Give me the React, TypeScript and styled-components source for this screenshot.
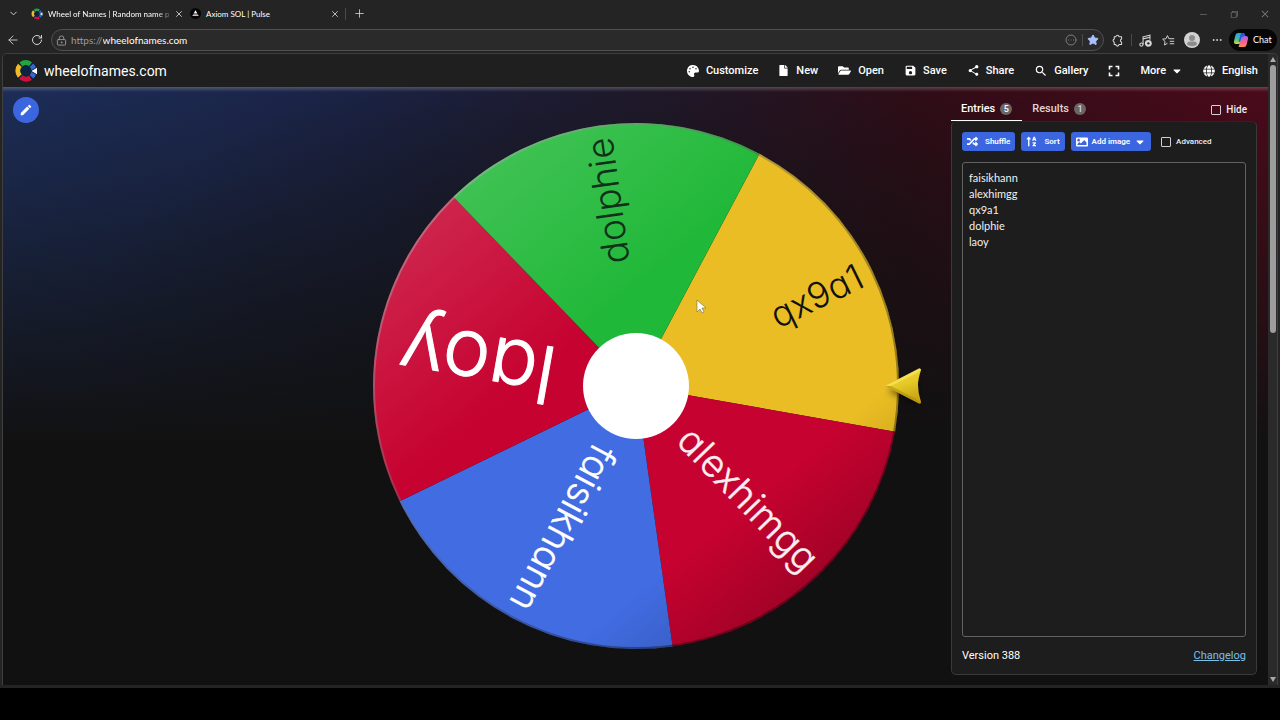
import React from 'react';
import styled, { createGlobalStyle } from 'styled-components';
import { MdSave, MdShare, MdSearch, MdEdit } from 'react-icons/md';
import { FaPalette, FaFile, FaFolderOpen, FaImage, FaRandom, FaSortAlphaUp, FaGlobe, FaCaretDown } from 'react-icons/fa';
import { VscChromeMinimize, VscChromeRestore, VscChromeClose } from 'react-icons/vsc';
import { ChevronDown, X, Plus, ArrowLeft, RotateCw, LockKeyhole, CircleEllipsis, Star, Ellipsis } from 'lucide-react';

const ui = `Lato, 'Noto Sans', sans-serif`;
const roboto = `Roboto, 'Liberation Sans', sans-serif`;

const Global = createGlobalStyle`
  *, *::before, *::after { box-sizing: border-box; }
  body { margin: 0; background: #000; color: #fff; font-family: ${roboto}; }
  button { font: inherit; color: inherit; border: 0; background: none; padding: 0; cursor: pointer; }
`;

const Screen = styled.div`
  display: flex;
  flex-direction: column;
  height: 100vh;
  min-height: 480px;
  padding-bottom: 32px;
  overflow: hidden;
`;

const Browser = styled.div`
  flex: 1;
  min-height: 0;
  display: flex;
  flex-direction: column;
  background: #242424;
`;

const TabStrip = styled.header`
  display: flex;
  align-items: center;
  height: 27px;
  padding-left: 6px;
  font: 8px/12px ${ui};
`;

const IconButton = styled.button<{ $w?: number; $dim?: boolean }>`
  display: flex;
  align-items: center;
  justify-content: center;
  flex: none;
  width: ${p => p.$w ?? 24}px;
  height: 20px;
  color: ${p => (p.$dim ? '#7d7d7d' : '#d6d6d6')};
`;

const Tabs = styled.div`
  display: flex;
  margin-left: 7px;
`;

const Tab = styled.div`
  display: flex;
  align-items: center;
  gap: 5px;
  width: 159px;
  height: 24px;
  padding: 0 5px 0 4px;
  color: #fff;
  svg { flex: none; }
`;

const TabTitle = styled.span<{ $fade?: boolean }>`
  flex: 1;
  white-space: nowrap;
  ${p => p.$fade && 'mask-image: linear-gradient(90deg, #000 90%, #0004);'}
`;

const Separator = styled.span`
  flex: none;
  width: 1px;
  height: 12px;
  background: #4a4a4a;
`;

const Spacer = styled.div`
  flex: 1;
`;

const AddressRow = styled.div`
  display: flex;
  align-items: center;
  height: 26px;
  padding: 0 3px 0 2px;
`;

const AddressBar = styled.div`
  flex: 1;
  display: flex;
  align-items: center;
  height: 22px;
  margin-left: 2px;
  padding-left: 4px;
  border: 1px solid #505050;
  border-radius: 11px;
  background: #2a2a2a;
`;

const AddressLabel = styled.label`
  flex: 1;
  display: flex;
  padding-left: 4px;
  font: 10px/16px ${ui};
  color: #9a9a9a;
  input {
    flex: 1;
    min-width: 0;
    padding: 0;
    border: 0;
    outline: none;
    background: none;
    color: #fff;
    font: inherit;
  }
`;

const ChatButton = styled.button`
  display: flex;
  align-items: center;
  gap: 4px;
  height: 22px;
  width: 48px;
  padding-left: 4px;
  border-radius: 11px;
  background: #060606;
  font: 9px/16px ${ui};
`;

const Viewport = styled.div`
  flex: 1;
  min-height: 0;
  display: flex;
  margin: 0 2px 3px;
  border: 1px solid #3f3f3f;
  border-width: 1px 1px 0;
  border-radius: 5px 5px 0 0;
  overflow: hidden;
  background: #1e1e1e;
`;

const Site = styled.div`
  flex: 1;
  min-width: 0;
  display: flex;
  flex-direction: column;
`;

const Toolbar = styled.nav`
  display: flex;
  align-items: center;
  height: 33px;
  padding: 0 10px 0 11px;
  background: #1f1f1f;
`;

const Brand = styled.a`
  display: flex;
  align-items: center;
  gap: 6px;
  color: #fff;
  text-decoration: none;
  font-size: 14px;
  line-height: 20px;
`;

const Menu = styled.div`
  display: flex;
  align-items: center;
  gap: 20px;
`;

const MenuButton = styled.button<{ $gap?: number }>`
  display: flex;
  align-items: center;
  gap: ${p => p.$gap ?? 7}px;
  font-size: 11px;
  line-height: 16px;
  font-weight: 500;
  svg { flex: none; }
`;

const Stage = styled.main`
  flex: 1;
  min-height: 0;
  display: grid;
  grid-template-columns: 1fr auto 1fr;
  grid-template-rows: minmax(0, 1fr);
  background:
    linear-gradient(180deg, #ffffff38, transparent 5px),
    radial-gradient(ellipse 45% 60% at 50% 50%, #111111b0, #11111100),
    linear-gradient(180deg, #11111100 0%, #11111148 18%, #111111a0 38%, #111 60%),
    linear-gradient(90deg, #1c2d58, #1b2346 28%, #201a2e 50%, #300c17 72%, #4b0a1b);
`;

const EditButton = styled.button`
  display: grid;
  place-items: center;
  width: 26px;
  height: 26px;
  margin: 10px;
  border-radius: 50%;
  background: #3b66e0;
`;

const WheelSvg = styled.svg`
  height: 100%;
  width: auto;
  max-width: 100%;
`;

const SliceLabel = styled.text`
  font-family: Inter, Lato, sans-serif;
  font-feature-settings: 'cv11';
  font-weight: 300;
  text-anchor: end;
  stroke-linejoin: round;
`;

const Side = styled.aside`
  justify-self: end;
  display: flex;
  flex-direction: column;
  width: 306px;
  margin: 9px 11px 10px 0;
`;

const TabsRow = styled.div`
  display: flex;
  align-items: stretch;
  height: 25px;
  padding-right: 10px;
`;

const SideTab = styled.button<{ $active?: boolean }>`
  display: flex;
  align-items: center;
  gap: 5px;
  padding: 2px 10px 0;
  border-bottom: 1px solid ${p => (p.$active ? '#fff' : 'transparent')};
  font-size: 11px;
  line-height: 16px;
  font-weight: 500;
  color: ${p => (p.$active ? '#fff' : '#e0d5d8')};
`;

const Count = styled.span`
  min-width: 12px;
  height: 12px;
  border-radius: 6px;
  background: #6a6567;
  font-size: 9px;
  line-height: 12px;
  text-align: center;
`;

const Check = styled.label<{ $small?: boolean }>`
  display: flex;
  align-items: center;
  gap: 5px;
  padding-top: ${p => (p.$small ? 0 : 2)}px;
  margin-left: ${p => (p.$small ? 4 : 0)}px;
  font-size: ${p => (p.$small ? 8 : 10)}px;
  line-height: 12px;
  font-weight: 500;
  color: #eee;
  input {
    appearance: none;
    width: 10px;
    height: 10px;
    margin: 0;
    border: 1px solid #d0d0d0;
    border-radius: 1px;
  }
`;

const Card = styled.section`
  flex: 1;
  min-height: 0;
  display: flex;
  flex-direction: column;
  padding: 10px;
  border: 1px solid #3a3a3a;
  border-top-color: #262626;
  border-radius: 5px;
  background: #1d1d1d;
`;

const Actions = styled.div`
  display: flex;
  align-items: center;
  gap: 6px;
`;

const Action = styled.button<{ $gap?: number }>`
  display: flex;
  align-items: center;
  gap: ${p => p.$gap ?? 7}px;
  height: 19px;
  padding: 0 5px;
  border-radius: 3px;
  background: #3b66e0;
  font-size: 8px;
  line-height: 12px;
  font-weight: 600;
`;

const Entries = styled.textarea`
  flex: 1;
  min-height: 0;
  margin: 11px 0;
  padding: 7px 6px;
  border: 1px solid #626262;
  border-radius: 3px;
  background: transparent;
  color: #f1f1f1;
  font: 11px/16px ${ui};
  resize: none;
  outline: none;
`;

const Footer = styled.footer`
  display: flex;
  justify-content: space-between;
  font-size: 11px;
  line-height: 16px;
  a { color: #79c0e8; }
`;

const Scrollbar = styled.div`
  display: flex;
  flex-direction: column;
  align-items: center;
  justify-content: space-between;
  width: 9px;
  padding: 3px 0;
  background: #2a2a2a;
`;

const ScrollTrack = styled.div`
  flex: 1;
  width: 6px;
  margin: 3px 0;
`;

const Thumb = styled.div`
  height: 44%;
  border-radius: 3px;
  background: #9d9d9d;
`;

const CX = 286;
const CY = 299;
const R = 263;

const point = (deg: number) => {
  const a = (deg * Math.PI) / 180;
  return `${CX + R * Math.cos(a)} ${CY + R * Math.sin(a)}`;
};

const slices = [
  { name: 'qx9a1', mid: -26, fill: '#e9bd23', ink: '#111', size: 36, end: 251, base: 11, stroke: 0 },
  { name: 'alexhimgg', mid: 46, fill: '#c60230', ink: '#fbeef0', size: 38, end: 251, base: 11, stroke: 0.4 },
  { name: 'faisikhann', mid: 118, fill: '#416ce2', ink: '#fff', size: 38, end: 251, base: 11, stroke: 0.4 },
  { name: 'laoy', mid: 190, fill: '#c60230', ink: '#fff', size: 80, end: 239, base: 24, stroke: 1 },
  { name: 'dolphie', mid: 262, fill: '#20b838', ink: '#10301a', size: 37, end: 251, base: 11, stroke: 0 },
];

function Wheel() {
  return (
    <WheelSvg viewBox="0 0 572 598" role="img" aria-label="Wheel">
      <defs>
        <linearGradient id="sheen" x1="0.15" y1="0.1" x2="0.85" y2="0.95">
          <stop offset="0" stopColor="#fff" stopOpacity="0.15" />
          <stop offset="0.36" stopColor="#fff" stopOpacity="0" />
          <stop offset="0.76" stopColor="#000" stopOpacity="0" />
          <stop offset="1" stopColor="#000" stopOpacity="0.24" />
        </linearGradient>
        <linearGradient id="rim" x1="0.1" y1="0.1" x2="0.8" y2="0.7">
          <stop offset="0" stopColor="#bbb" stopOpacity="0.5" />
          <stop offset="0.45" stopColor="#666" stopOpacity="0.4" />
          <stop offset="1" stopColor="#000" stopOpacity="0.35" />
        </linearGradient>
        <linearGradient id="gold" x1="0" y1="0" x2="0.3" y2="1">
          <stop offset="0" stopColor="#eed63a" />
          <stop offset="0.55" stopColor="#e6c926" />
          <stop offset="1" stopColor="#c9a515" />
        </linearGradient>
        <filter id="soft" x="-50%" y="-50%" width="200%" height="200%">
          <feGaussianBlur stdDeviation="3" />
        </filter>
      </defs>
      {slices.map(s => (
        <path key={s.name} fill={s.fill} d={`M${CX} ${CY}L${point(s.mid - 36)}A${R} ${R} 0 0 1 ${point(s.mid + 36)}Z`} />
      ))}
      <circle cx={CX} cy={CY} r={R} fill="url(#sheen)" />
      <circle cx={CX} cy={CY} r={R - 1} fill="none" stroke="url(#rim)" strokeWidth="2" />
      {slices.map(s => (
        <SliceLabel
          key={s.name}
          x={s.end}
          y={s.base}
          fill={s.ink}
          stroke={s.ink}
          strokeWidth={s.stroke}
          fontSize={s.size}
          transform={`translate(${CX} ${CY}) rotate(${s.mid})`}
        >
          {s.name}
        </SliceLabel>
      ))}
      <circle cx={CX} cy={CY} r="53" fill="#fff" />
      <path d="M538 304L566 288L568 320Z" fill="#000" opacity="0.45" filter="url(#soft)" />
      <path d="M535 299L569 281.500Q571 281 571 283Q568 292 568 298Q568 306 571 315Q571 317 569 316.500Z" fill="url(#gold)" />
      <path d="M535 299L569 281.500Q571 281 571 283L567 286L541 299Z" fill="#fff27a" opacity="0.5" />
      <path d="M535 299L569 316.500Q571 317 571 315L566 312L541 299Z" fill="#a8860c" opacity="0.5" />
      <path d="M347 213v12l3-3 2 4 2-1-2-4h4Z" fill="#fff" stroke="#555" strokeWidth="0.5" />
    </WheelSvg>
  );
}

function Logo({ size }: { size: number }) {
  return (
    <svg width={size} height={size} viewBox="0 0 24 24" aria-hidden="true">
      <circle cx="12" cy="12" r="11" fill="#0b2440" />
      <g fill="none" strokeWidth="5">
        <path d="M7 5.400A8 8 0 0 1 16.500 5.200" stroke="#23a63c" />
        <path d="M5.800 17A8 8 0 0 1 5.900 6.400" stroke="#eebb22" />
        <path d="M16.500 18.800A8 8 0 0 1 6.800 18.200" stroke="#d0103a" />
        <path d="M17.500 6.200A8 8 0 0 1 17.500 17.800" stroke="#3566d6" />
      </g>
      <circle cx="12" cy="12" r="5" fill="#0b2440" />
      <path d="M16.500 12L23.500 8V16Z" fill="#fff" stroke="#0b2440" strokeWidth="1" />
    </svg>
  );
}

function Copilot() {
  return (
    <svg width="16" height="16" viewBox="0 0 16 16" aria-hidden="true">
      <defs>
        <linearGradient id="cpA" x1="0" y1="0" x2="0" y2="1">
          <stop offset="0" stopColor="#2a9df4" />
          <stop offset="0.6" stopColor="#45c48c" />
          <stop offset="1" stopColor="#f2d02c" />
        </linearGradient>
        <linearGradient id="cpB" x1="0" y1="0" x2="0" y2="1">
          <stop offset="0" stopColor="#a65cf0" />
          <stop offset="0.5" stopColor="#f0609c" />
          <stop offset="1" stopColor="#fb8d4e" />
        </linearGradient>
      </defs>
      <path d="M5 1h5.500L7.500 10.500Q7 12 5.500 12H3Q.5 12 1 9L2.500 3Q3 1 5 1Z" fill="url(#cpA)" />
      <path d="M11 15H5.500L8.500 5.500Q9 4 10.500 4H13Q15.500 4 15 7L13.500 13Q13 15 11 15Z" fill="url(#cpB)" />
      <path d="M8 1h2.500Q12 1 12.500 4H10.500Q9 4 8.500 5.500L7 10L5.500 9.500Z" fill="#1e5fd0" />
    </svg>
  );
}

function Extensions() {
  return (
    <svg width="13" height="13" viewBox="0 0 16 16" fill="none" stroke="currentColor" strokeWidth="1.300" strokeLinejoin="round" aria-hidden="true">
      <path d="M4 3.500H6A1.900 1.900 0 0 1 9.800 3.500H13V6.300A1.900 1.900 0 0 0 13 10V13H9.800A1.900 1.900 0 0 1 6 13H4V10A1.900 1.900 0 0 1 4 6.300Z" />
    </svg>
  );
}

function MusicBadge() {
  return (
    <svg width="13" height="13" viewBox="0 0 16 16" fill="none" stroke="currentColor" strokeWidth="1.300" aria-hidden="true">
      <circle cx="3" cy="13" r="2" />
      <path d="M5 13V3.500L13.500 1.500V7M5 6L13.500 4" />
      <circle cx="11.500" cy="11.500" r="4.200" fill="currentColor" stroke="none" />
      <circle cx="11.500" cy="11.500" r="1.500" fill="#242424" stroke="none" />
    </svg>
  );
}

function Favorites() {
  return (
    <svg width="13" height="13" viewBox="0 0 16 16" fill="none" stroke="currentColor" strokeWidth="1.200" strokeLinejoin="round" aria-hidden="true">
      <path d="M8.500 5.800L6.700 2L4.900 5.800L.8 6.400L3.800 9.300L3.100 13.500L6.700 11.500M8.500 5.800H15M9.500 9H15M9.500 12H15" />
    </svg>
  );
}

function Avatar() {
  return (
    <svg width="16" height="16" viewBox="0 0 16 16" aria-hidden="true">
      <circle cx="8" cy="8" r="8" fill="#d2d2d2" />
      <circle cx="8" cy="6" r="3" fill="#8c8c8c" />
      <path d="M3 12.500Q3 9.500 6 9.500H10Q13 9.500 13 12.500Q8 16 3 12.500Z" fill="#8c8c8c" />
    </svg>
  );
}

function AxiomIcon() {
  return (
    <svg width="11" height="11" viewBox="0 0 12 12" aria-hidden="true">
      <circle cx="6" cy="6" r="6" fill="#050505" />
      <path d="M6 2.500L8 6H4ZM3.500 7H8.500L9.500 8.500H2.500Z" fill="#fff" />
    </svg>
  );
}

function FullscreenIcon() {
  return (
    <svg width="12" height="12" viewBox="0 0 12 12" fill="none" stroke="currentColor" strokeWidth="1.600" aria-hidden="true">
      <path d="M1.500 4.500V1.500H4.500M7.500 1.500H10.500V4.500M10.500 7.500V10.500H7.500M4.500 10.500H1.500V7.500" />
    </svg>
  );
}

export default function App() {
  return (
    <Screen>
      <Global />
      <Browser>
        <TabStrip>
          <IconButton $w={14} aria-label="Tab actions"><ChevronDown size={11} /></IconButton>
          <Tabs>
            <Tab>
              <Logo size={12} />
              <TabTitle $fade>Wheel of Names | Random name p</TabTitle>
              <IconButton $w={10} aria-label="Close tab"><X size={10} /></IconButton>
            </Tab>
            <Tab>
              <AxiomIcon />
              <TabTitle>Axiom SOL | Pulse</TabTitle>
              <IconButton $w={10} aria-label="Close tab"><X size={10} /></IconButton>
            </Tab>
          </Tabs>
          <Separator />
          <IconButton $w={26} aria-label="New tab"><Plus size={13} strokeWidth={1.5} /></IconButton>
          <Spacer />
          <IconButton $w={31} $dim aria-label="Minimize"><VscChromeMinimize size={10} /></IconButton>
          <IconButton $w={31} $dim aria-label="Restore"><VscChromeRestore size={10} /></IconButton>
          <IconButton $w={31} $dim aria-label="Close"><VscChromeClose size={10} /></IconButton>
        </TabStrip>
        <AddressRow>
          <IconButton $w={22} aria-label="Back"><ArrowLeft size={14} strokeWidth={1.5} /></IconButton>
          <IconButton $w={25} aria-label="Reload"><RotateCw size={12} strokeWidth={2} /></IconButton>
          <AddressBar>
            <LockKeyhole size={11} color="#9a9a9a" />
            <AddressLabel>https://<input aria-label="Address" defaultValue="wheelofnames.com" /></AddressLabel>
            <IconButton $w={22} $dim aria-label="More"><CircleEllipsis size={12} /></IconButton>
            <Separator />
            <IconButton $w={20} aria-label="Favorite"><Star size={12} fill="#a9c1ff" color="#a9c1ff" /></IconButton>
          </AddressBar>
          <IconButton $w={27} aria-label="Extensions"><Extensions /></IconButton>
          <Separator />
          <IconButton $w={26} aria-label="Media"><MusicBadge /></IconButton>
          <IconButton $w={21} aria-label="Favorites"><Favorites /></IconButton>
          <IconButton $w={26} aria-label="Profile"><Avatar /></IconButton>
          <IconButton $w={24} aria-label="Settings"><Ellipsis size={12} /></IconButton>
          <ChatButton><Copilot />Chat</ChatButton>
        </AddressRow>
        <Viewport>
          <Site>
            <Toolbar>
              <Brand href="#"><Logo size={24} />wheelofnames.com</Brand>
              <Spacer />
              <Menu>
                <MenuButton><FaPalette size={12} />Customize</MenuButton>
                <MenuButton><FaFile size={11} />New</MenuButton>
                <MenuButton><FaFolderOpen size={13} />Open</MenuButton>
                <MenuButton $gap={6}><MdSave size={13} />Save</MenuButton>
                <MenuButton $gap={6}><MdShare size={13} />Share</MenuButton>
                <MenuButton $gap={6}><MdSearch size={14} />Gallery</MenuButton>
                <MenuButton aria-label="Fullscreen"><FullscreenIcon /></MenuButton>
                <MenuButton $gap={5}>More<FaCaretDown size={12} /></MenuButton>
                <MenuButton><FaGlobe size={12} />English</MenuButton>
              </Menu>
            </Toolbar>
            <Stage>
              <div>
                <EditButton aria-label="Edit"><MdEdit size={14} /></EditButton>
              </div>
              <Wheel />
              <Side>
                <TabsRow>
                  <SideTab $active>Entries<Count>5</Count></SideTab>
                  <SideTab>Results<Count>1</Count></SideTab>
                  <Spacer />
                  <Check><input type="checkbox" />Hide</Check>
                </TabsRow>
                <Card>
                  <Actions>
                    <Action><FaRandom size={11} />Shuffle</Action>
                    <Action><FaSortAlphaUp size={11} />Sort</Action>
                    <Action $gap={4}><FaImage size={12} />Add image<FaCaretDown size={12} /></Action>
                    <Check $small><input type="checkbox" />Advanced</Check>
                  </Actions>
                  <Entries aria-label="Entries" spellCheck={false} defaultValue={'faisikhann\nalexhimgg\nqx9a1\ndolphie\nlaoy'} />
                  <Footer><span>Version 388</span><a href="#">Changelog</a></Footer>
                </Card>
              </Side>
            </Stage>
          </Site>
          <Scrollbar>
            <svg width="6" height="5" viewBox="0 0 6 5"><path d="M3 0L6 5H0Z" fill="#aaa" /></svg>
            <ScrollTrack><Thumb /></ScrollTrack>
            <svg width="6" height="5" viewBox="0 0 6 5"><path d="M3 5L6 0H0Z" fill="#aaa" /></svg>
          </Scrollbar>
        </Viewport>
      </Browser>
    </Screen>
  );
}
